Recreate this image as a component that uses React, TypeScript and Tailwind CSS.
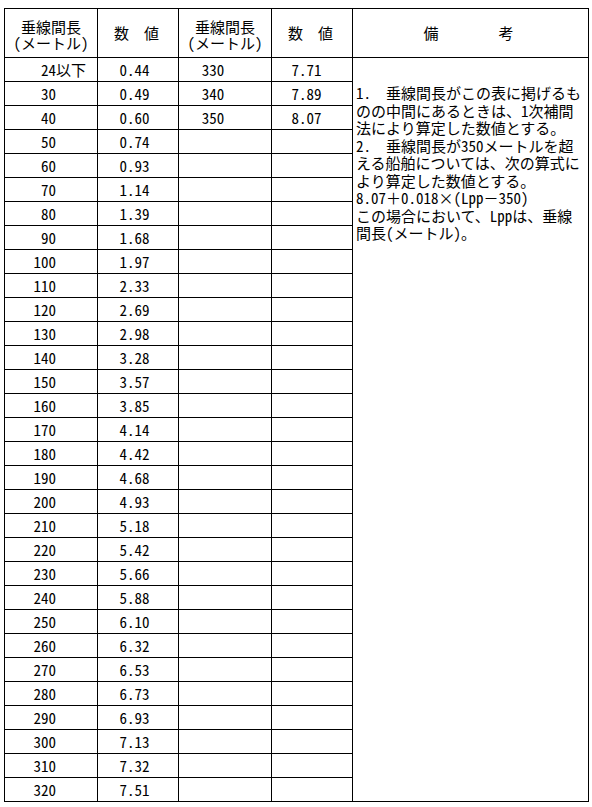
import React from 'react'

const left = ['30', '40', '50', '60', '70', '80', '90', '100', '110', '120', '130', '140', '150', '160', '170', '180', '190', '200', '210', '220', '230', '240', '250', '260', '270', '280', '290', '300', '310', '320']
const vals = ['0.44', '0.49', '0.60', '0.74', '0.93', '1.14', '1.39', '1.68', '1.97', '2.33', '2.69', '2.98', '3.28', '3.57', '3.85', '4.14', '4.42', '4.68', '4.93', '5.18', '5.42', '5.66', '5.88', '6.10', '6.32', '6.53', '6.73', '6.93', '7.13', '7.32', '7.51']
const right = [
  ['330', '7.71'],
  ['340', '7.89'],
  ['350', '8.07'],
]

// half-width latin/digits like the bitmap gothic in the original
function H({ children }: { children: React.ReactNode }) {
  return <span className="[font-feature-settings:'hwid']">{children}</span>
}

const cell = 'border border-black p-0 align-middle'

export default function App() {
  return (
    <div className="bg-white w-[592px] h-[807px] pt-[8px] pl-[4px] text-black text-[15px] font-['Noto_Sans_CJK_JP','Noto_Sans_CJK_SC',sans-serif]">
      <table className="border-collapse table-fixed w-[584px]">
        <colgroup>
          <col className="w-[93px]" />
          <col className="w-[81px]" />
          <col className="w-[93px]" />
          <col className="w-[81px]" />
          <col className="w-[236px]" />
        </colgroup>
        <thead>
          <tr className="h-[49px]">
            <th className={`${cell} font-normal leading-[16px] text-center pt-[3px]`}>
              垂線間長
              <br />
              <H>(</H>メートル<H>)</H>
            </th>
            <th className={`${cell} font-normal text-center pr-[3px]`}>数　値</th>
            <th className={`${cell} font-normal leading-[16px] text-center pt-[3px]`}>
              垂線間長
              <br />
              <H>(</H>メートル<H>)</H>
            </th>
            <th className={`${cell} font-normal text-center pr-[3px]`}>数　値</th>
            <th className={`${cell} font-normal text-center pr-[4px]`}>備　　　　考</th>
          </tr>
        </thead>
        <tbody>
          {vals.map((v, i) => (
            <tr key={i} className="h-[24px] leading-[22px]">
              <td className={cell}>
                <span className="inline-block w-[51px] text-right">
                  <H>{i === 0 ? '24' : left[i - 1]}</H>
                </span>
                {i === 0 && <span>以下</span>}
              </td>
              <td className={`${cell} text-center pr-[7px]`}>
                <H>{v}</H>
              </td>
              <td className={`${cell} text-center pr-[24px]`}>
                <H>{right[i] ? right[i][0] : ''}</H>
              </td>
              <td className={`${cell} text-center pr-[11px]`}>
                <H>{right[i] ? right[i][1] : ''}</H>
              </td>
              {i === 0 && (
                <td rowSpan={31} className="border border-black align-top pt-[26px] pl-[3px] leading-[17.5px] whitespace-nowrap">
                  <div><H>1.</H>　垂線間長がこの表に掲げるも</div>
                  <div>のの中間にあるときは、<H>1</H>次補間</div>
                  <div>法により算定した数値とする。</div>
                  <div><H>2.</H>　垂線間長が<H>350</H>メートルを超</div>
                  <div>える船舶については、次の算式に</div>
                  <div>より算定した数値とする。</div>
                  <div><H>8.07</H>＋<H>0.018</H>×<H>(Lpp</H>－<H>350)</H></div>
                  <div>この場合において、<H>Lpp</H>は、垂線</div>
                  <div>間長<H>(</H>メートル<H>)</H>。</div>
                </td>
              )}
            </tr>
          ))}
        </tbody>
      </table>
    </div>
  )
}
